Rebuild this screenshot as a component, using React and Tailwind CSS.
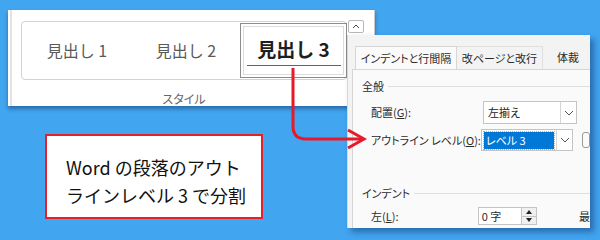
import React from 'react';

const jp = { fontFamily: '"Noto Sans CJK JP", "Noto Sans", sans-serif' };

function Chevron() {
    return (
        <svg width="10" height="6" viewBox="0 0 10 6" fill="none">
            <path d="M1 1 L5 5 L9 1" stroke="#555" strokeWidth="1" />
        </svg>
    );
}

function Dropdown({ children, selected }) {
    return (
        <div className="flex h-full w-[94px] border border-[#c4c4c4] bg-white">
            <div className="flex-1 flex items-center pl-[2px] pr-[2px]">
                {selected ? (
                    <div className="w-full h-[17px] bg-[#0078d7] outline outline-1 outline-dotted outline-[#f5a623] text-white pl-[2px] leading-[17px]">
                        {children}
                    </div>
                ) : (
                    <span className="pl-[2px] text-[#222]">{children}</span>
                )}
            </div>
            <div className="w-[16px] border-l border-[#d6d6d6] flex items-center justify-center">
                <Chevron />
            </div>
        </div>
    );
}

export default function App() {
    return (
        <div className="relative w-[600px] h-[240px] bg-[#42a5ef] overflow-hidden" style={jp}>
            {/* Ribbon: styles gallery */}
            <div className="absolute left-[8px] top-[10px] w-[367px] h-[96px] bg-white border-r border-[#c8c8c8] shadow-[0_3px_4px_rgba(10,40,90,0.45)] overflow-hidden flex">
                <div className="ml-[2px] w-[2px] h-full bg-[#e3e3e3]" />
                <div className="ml-[9px] pt-[11px] flex flex-col">
                    <div className="flex">
                        <div className="w-[326px] h-[59px] rounded-[4px] border border-[#d2d2d2] flex items-center">
                            <div className="w-[110px] text-center text-[16px] text-[#5a5a5a] pb-[2px]">見出し 1</div>
                            <div className="w-[108px] text-center text-[16px] text-[#5a5a5a] pb-[2px]">見出し 2</div>
                            <div className="w-[107px] h-[55px] border border-[#8c8c8c] p-[2px] -mr-[2px]">
                                <div className="h-full border border-[#dcdcdc] flex flex-col items-center pt-[10px]">
                                    <div className="text-[19px] font-bold text-[#1e1e1e] leading-[24px]">見出し 3</div>
                                    <div className="w-[94px] h-[1px] bg-[#3a6aa6] mt-[4px]" />
                                </div>
                            </div>
                        </div>
                        <div className="ml-[1px] w-[16px] h-[13px] -mt-[1px] border border-[#b8b8b8] rounded-[2px] flex items-center justify-center">
                            <svg width="8" height="5" viewBox="0 0 8 5" fill="none">
                                <path d="M1 4 L4 1 L7 4" stroke="#444" strokeWidth="1" />
                            </svg>
                        </div>
                    </div>
                    <div className="w-[326px] text-center text-[12px] text-[#666] mt-[11px] leading-[16px] [font-feature-settings:'palt']">
                        スタイル
                    </div>
                </div>
            </div>

            {/* Paragraph dialog */}
            <div className="absolute left-[347px] top-[35px] w-[243px] h-[193px] bg-[#f3f3f3] border-l border-[#d8d8d8] shadow-[4px_4px_6px_rgba(10,40,90,0.45)] overflow-hidden text-[11px] text-[#2a2a2a] [font-feature-settings:'palt']">
                <div className="flex pt-[11px] pl-[7px] h-[34px]">
                    <div className="w-[102px] h-[23px] bg-[#fafafa] border border-b-0 border-[#d6d6d6] flex items-center justify-center">
                        インデントと行間隔
                    </div>
                    <div className="w-[86px] h-[23px] border-r border-t border-[#e0e0e0] flex items-center justify-center">
                        改ページと改行
                    </div>
                    <div className="h-[23px] pl-[14px] flex items-center">体裁</div>
                </div>
                <div className="ml-[4px] h-full bg-[#fafafa] border-t border-l border-[#d6d6d6] pl-[9px]">
                    <div className="flex items-center h-[16px] mt-[8px]">
                        <span>全般</span>
                        <div className="flex-1 h-[1px] bg-[#e0e0e0] ml-[4px]" />
                    </div>
                    <div className="flex items-center h-[23px] mt-[7px] pl-[9px]">
                        <span className="w-[112px]">
                            配置(<span className="underline">G</span>):
                        </span>
                        <Dropdown>左揃え</Dropdown>
                    </div>
                    <div className="flex items-center h-[22px] mt-[5px] pl-[9px]">
                        <span className="w-[112px] whitespace-nowrap">
                            アウトライン レベル(<span className="underline">O</span>):
                        </span>
                        <Dropdown selected>レベル 3</Dropdown>
                        <div className="ml-[9px] w-[8px] h-[16px] border border-[#999] rounded-[3px]" />
                    </div>
                    <div className="flex items-center h-[16px] mt-[34px]">
                        <span>インデント</span>
                        <div className="flex-1 h-[1px] bg-[#e0e0e0] ml-[4px]" />
                    </div>
                    <div className="flex items-center h-[18px] mt-[6px] pl-[9px]">
                        <span className="w-[112px]">
                            左(<span className="underline">L</span>):
                        </span>
                        <div className="flex w-[62px] h-full border border-[#c4c4c4] bg-white">
                            <span className="flex-1 pl-[3px] leading-[16px]">0 字</span>
                            <div className="w-[15px] flex flex-col border-l border-[#c4c4c4]">
                                <div className="flex-1 flex items-center justify-center bg-[#f0f0f0] border-b border-[#c4c4c4]">
                                    <svg width="6" height="4" viewBox="0 0 6 4"><path d="M0 4 L3 0 L6 4 Z" fill="#222" /></svg>
                                </div>
                                <div className="flex-1 flex items-center justify-center bg-[#f0f0f0]">
                                    <svg width="6" height="4" viewBox="0 0 6 4"><path d="M0 0 L3 4 L6 0 Z" fill="#222" /></svg>
                                </div>
                            </div>
                        </div>
                        <span className="ml-[42px]">最</span>
                    </div>
                </div>
            </div>

            {/* Callout */}
            <div className="absolute left-[45px] top-[134px] w-[218px] h-[85px] bg-white border-2 border-[#e5202b] pl-[19px] pt-[17px] text-[18px] leading-[28px] text-[#111] whitespace-nowrap">
                <div>Word の段落のアウト</div>
                <div>ラインレベル 3 で分割</div>
            </div>

            {/* Red arrow */}
            <svg className="absolute left-0 top-0" width="600" height="240" viewBox="0 0 600 240" fill="none">
                <path d="M293 68 V126 Q293 139 306 139 H362" stroke="#e8192a" strokeWidth="3" />
                <path d="M348 130 L364 139 L348 148" stroke="#e8192a" strokeWidth="3" strokeLinejoin="miter" />
            </svg>
        </div>
    );
}
